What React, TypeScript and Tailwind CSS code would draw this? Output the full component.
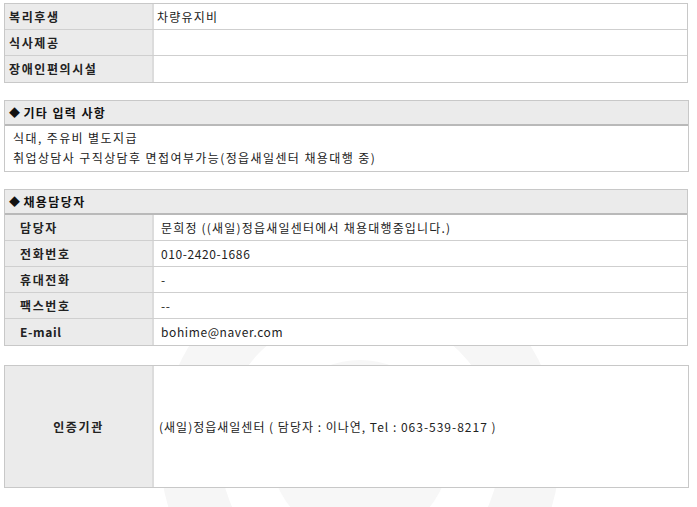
const font = { fontFamily: '"Noto Sans CJK KR", "Liberation Sans", sans-serif' };

function Row({
  label,
  value,
  last,
  pad,
  latin,
}: {
  label: string;
  value: string;
  last?: boolean;
  pad: "tight" | "wide";
  latin?: boolean;
}) {
  return (
    <div className={["flex h-[26px]", last ? "" : "border-b border-[#cfcfcf]"].join(" ")}>
      <div
        className={[
          "flex w-[149px] shrink-0 items-center border-r-2 border-[#dcdcdc] bg-[#ebebeb] text-[12px] font-bold text-[#222]",
          latin && label === "E-mail" ? "tracking-[0.6px]" : "tracking-[1.6px]",
          pad === "tight" ? "pl-[4px]" : "pl-[15px]",
        ].join(" ")}
      >
        {label}
      </div>
      <div
        className={[
          "flex flex-1 items-center bg-white text-[12px] text-[#222]",
          latin ? "tracking-[0.6px]" : "tracking-[1.2px]",
          pad === "tight" ? "pl-[3px]" : "pl-[7px]",
        ].join(" ")}
      >
        {value}
      </div>
    </div>
  );
}

function SectionHeader({ title }: { title: string }) {
  return (
    <div className="flex h-[25px] items-center border-b-2 border-[#b9b9b9] bg-[#ebebeb] pl-[4px] text-[12px] font-bold tracking-[1.4px] text-[#111]">
      <span className="mr-[2px] text-[11px]">◆</span>
      {title}
    </div>
  );
}

export default function App() {
  const contacts: [string, string, boolean][] = [
    ["담당자", "문희정 ((새일)정읍새일센터에서 채용대행중입니다.)", false],
    ["전화번호", "010-2420-1686", true],
    ["휴대전화", "-", true],
    ["팩스번호", "--", true],
    ["E-mail", "bohime@naver.com", true],
  ];

  return (
    <div className="relative h-[507px] w-[697px] overflow-hidden bg-white" style={font}>
      <svg className="absolute left-0 top-0" width="697" height="507" viewBox="0 0 697 507">
        <circle cx="360" cy="450" r="170" fill="none" stroke="#f6f6f6" strokeWidth="60" />
        <circle cx="360" cy="450" r="90" fill="#f7f7f7" />
      </svg>

      <div className="relative flex flex-col px-[4px] pt-[3px]">
        <div className="w-[684px] border border-[#c8c8c8]">
          <Row pad="tight" label="복리후생" value="차량유지비" />
          <Row pad="tight" label="식사제공" value="" />
          <Row pad="tight" label="장애인편의시설" value="" last />
        </div>

        <div className="mt-[17px] w-[685px] border border-[#c8c8c8]">
          <SectionHeader title="기타 입력 사항" />
          <div className="h-[45px] bg-white pl-[8px] pt-[2px] text-[12px] leading-[20px] tracking-[1.4px] text-[#222]">
            <div>식대, 주유비 별도지급</div>
            <div>취업상담사 구직상담후 면접여부가능(정읍새일센터 채용대행 중)</div>
          </div>
        </div>

        <div className="mt-[17px] w-[684px] border border-[#c8c8c8]">
          <SectionHeader title="채용담당자" />
          {contacts.map(([label, value, latin], i) => (
            <Row
              key={label}
              pad="wide"
              label={label}
              value={value}
              latin={latin}
              last={i === contacts.length - 1}
            />
          ))}
        </div>

        <div className="mt-[19px] flex h-[123px] w-[685px] border border-[#c8c8c8]">
          <div className="flex w-[149px] shrink-0 items-center justify-center border-r-2 border-[#dcdcdc] bg-[#ebebeb] text-[12px] font-bold tracking-[1.6px] text-[#222]">
            인증기관
          </div>
          <div className="flex flex-1 items-center bg-white pl-[5px] text-[12px] tracking-[1px] text-[#222]">
            (새일)정읍새일센터 ( 담당자 : 이나연, Tel : 063-539-8217 )
          </div>
        </div>
      </div>
    </div>
  );
}
